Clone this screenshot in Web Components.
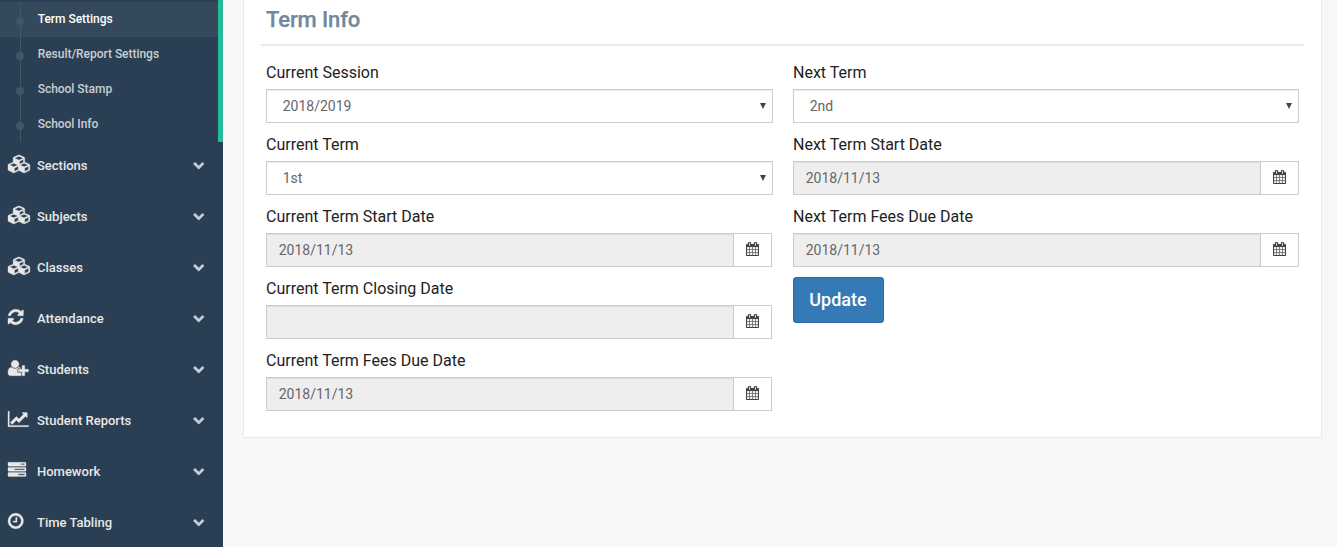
<!DOCTYPE html>
<html lang="en">
<head>
<meta charset="utf-8">
<title>Term Settings</title>
<style>
html,body{margin:0;height:100%;overflow:hidden;background:#f7f7f7}
body{font-family:Roboto,"Liberation Sans",sans-serif;font-size:14px}
</style>
</head>
<body>
<app-shell>
  <side-nav slot="nav">
    <sub-menu slot="sub">
      <sub-item active>Term Settings</sub-item>
      <sub-item>Result/Report Settings</sub-item>
      <sub-item>School Stamp</sub-item>
      <sub-item>School Info</sub-item>
    </sub-menu>
    <nav-item icon="cubes">Sections</nav-item>
    <nav-item icon="cubes">Subjects</nav-item>
    <nav-item icon="cubes">Classes</nav-item>
    <nav-item icon="refresh">Attendance</nav-item>
    <nav-item icon="userplus">Students</nav-item>
    <nav-item icon="chart">Student Reports</nav-item>
    <nav-item icon="tasks">Homework</nav-item>
    <nav-item icon="clock">Time Tabling</nav-item>
  </side-nav>
  <term-panel heading="Term Info">
    <select-field slot="left" label="Current Session" value="2018/2019"></select-field>
    <select-field slot="left" label="Current Term" value="1st"></select-field>
    <date-field slot="left" label="Current Term Start Date" value="2018/11/13"></date-field>
    <date-field slot="left" label="Current Term Closing Date" value=""></date-field>
    <date-field slot="left" label="Current Term Fees Due Date" value="2018/11/13"></date-field>
    <select-field slot="right" label="Next Term" value="2nd"></select-field>
    <date-field slot="right" label="Next Term Start Date" value="2018/11/13"></date-field>
    <date-field slot="right" label="Next Term Fees Due Date" value="2018/11/13"></date-field>
    <primary-button slot="right">Update</primary-button>
  </term-panel>
</app-shell>
<script>
const ICONS = {
  cubes:[0,2304,"M640 1632l384-192v-314l-384 164v342zm-64-454l404-173-404-173-404 173zm1088 454l384-192v-314l-384 164v342zm-64-454l404-173-404-173-404 173zm-448-293l384-165v-266l-384 164v267zm-64-379l441-189-441-189-441 189zm1088 518v416q0 36-19 67t-52 47l-448 224q-25 14-57 14t-57-14l-448-224q-4-2-7-4-2 2-7 4l-448 224q-25 14-57 14t-57-14l-448-224q-33-16-52-47t-19-67v-416q0-38 21.5-70t56.5-48l434-186v-400q0-38 21.5-70t56.5-48l448-192q23-10 50-10t50 10l448 192q35 16 56.5 48t21.5 70v400l434 186q36 16 57 48t21 70z"],
  refresh:[128,1536,"M1639 1056q0 5-1 7-64 268-268 434.5t-478 166.5q-146 0-282.5-55t-243.5-157l-129 129q-19 19-45 19t-45-19-19-45v-448q0-26 19-45t45-19h448q26 0 45 19t19 45-19 45l-137 137q71 66 161 102t187 36q134 0 250-65t186-179q11-17 53-117 8-23 30-23h192q13 0 22.5 9.5t9.5 22.5zm25-800v448q0 26-19 45t-45 19h-448q-26 0-45-19t-19-45 19-45l138-138q-148-137-349-137-134 0-250 65t-186 179q-11 17-53 117-8 23-30 23h-199q-13 0-22.5-9.5t-9.5-22.5v-7q65-268 270-434.5t480-166.5q146 0 284 55.5t245 156.5l130-129q19-19 45-19t45 19 19 45z"],
  userplus:[0,2048,"M704 896q-159 0-271.5-112.5t-112.5-271.5 112.5-271.5 271.5-112.5 271.5 112.5 112.5 271.5-112.5 271.5-271.5 112.5zm960 128h352q13 0 22.5 9.5t9.5 22.5v192q0 13-9.5 22.5t-22.5 9.5h-352v352q0 13-9.5 22.5t-22.5 9.5h-192q-13 0-22.5-9.5t-9.5-22.5v-352h-352q-13 0-22.5-9.5t-9.5-22.5v-192q0-13 9.5-22.5t22.5-9.5h352v-352q0-13 9.5-22.5t22.5-9.5h192q13 0 22.5 9.5t9.5 22.5v352zm-736 224q0 52 38 90t90 38h256v238q-68 50-171 50h-874q-121 0-194-69t-73-190q0-53 3.5-103.5t14-109 26.5-108.5 43-97.5 62-81 85.5-53.5 111.5-20q19 0 39 17 79 61 154.5 91.5t164.5 30.5 164.5-30.5 154.5-91.5q20-17 39-17 132 0 217 96h-223q-52 0-90 38t-38 90v192z"],
  chart:[0,2048,"M2048 1536v128h-2048v-1536h128v1408h1920zm-128-1248v435q0 21-19.5 29.5t-35.5-7.5l-121-121-633 633q-10 10-23 10t-23-10l-233-233-416 416-192-192 585-585q10-10 23-10t23 10l233 233 464-464-121-121q-16-16-7.5-35.5t29.5-19.5h435q14 0 23 9t9 23z"],
  tasks:[0,1792,"M1024 1408h640v-128h-640v128zm-384-512h1024v-128h-1024v128zm640-512h384v-128h-384v128zm512 832v256q0 26-19 45t-45 19h-1664q-26 0-45-19t-19-45v-256q0-26 19-45t45-19h1664q26 0 45 19t19 45zm0-512v256q0 26-19 45t-45 19h-1664q-26 0-45-19t-19-45v-256q0-26 19-45t45-19h1664q26 0 45 19t19 45zm0-512v256q0 26-19 45t-45 19h-1664q-26 0-45-19t-19-45v-256q0-26 19-45t45-19h1664q26 0 45 19t19 45z"],
  clock:[128,1536,"M1024 544v448q0 14-9 23t-23 9h-320q-14 0-23-9t-9-23v-64q0-14 9-23t23-9h224v-352q0-14 9-23t23-9h64q14 0 23 9t9 23zm416 352q0-148-73-273t-198-198-273-73-273 73-198 198-73 273 73 273 198 198 273 73 273-73 198-198 73-273zm224 0q0 209-103 385.5t-279.5 279.5-385.5 103-385.5-103-279.5-279.5-103-385.5 103-385.5 279.5-279.5 385.5-103 385.5 103 279.5 279.5 103 385.5z"],
  chevron:[0,1792,"M1683 808l-742 741q-19 19-45 19t-45-19l-742-741q-19-19-19-45.5t19-45.5l166-165q19-19 45-19t45 19l531 531 531-531q19-19 45-19t45 19l166 165q19 19 19 45.5t-19 45.5z"],
  calendar:[64,1664,"M192 1664h288v-288h-288v288zm352 0h320v-288h-320v288zm-352-352h288v-320h-288v320zm352 0h320v-320h-320v320zm-352-384h288v-288h-288v288zm736 736h320v-288h-320v288zm-384-736h320v-288h-320v288zm768 736h288v-288h-288v288zm-384-352h320v-320h-320v320zm-352-864v-288q0-13-9.5-22.5t-22.5-9.5h-64q-13 0-22.5 9.5t-9.5 22.5v288q0 13 9.5 22.5t22.5 9.5h64q13 0 22.5-9.5t9.5-22.5zm736 864h288v-320h-288v320zm-384-384h320v-288h-320v288zm384 0h288v-288h-288v288zm32-480v-288q0-13-9.5-22.5t-22.5-9.5h-64q-13 0-22.5 9.5t-9.5 22.5v288q0 13 9.5 22.5t22.5 9.5h64q13 0 22.5-9.5t9.5-22.5zm384-64v1280q0 52-38 90t-90 38h-1408q-52 0-90-38t-38-90v-1280q0-52 38-90t90-38h128v-96q0-66 47-113t113-47h64q66 0 113 47t47 113v96h384v-96q0-66 47-113t113-47h64q66 0 113 47t47 113v96h128q52 0 90 38t38 90z"]
};
const icon = (name, size, weight = 0) => {
  const [x, w, d] = ICONS[name];
  return `<svg class="${name}" width="${w / 1792 * size}" height="${size}" viewBox="${x} 0 ${w} 1792" fill="currentColor" stroke="currentColor" stroke-width="${weight}" aria-hidden="true"><path d="${d}"/></svg>`;
};
const define = (tag, render) => customElements.define(tag, class extends HTMLElement {
  connectedCallback() {
    if (!this.shadowRoot) this.attachShadow({mode: "open"}).innerHTML = render(this);
  }
});

define("app-shell", () => `<style>
  :host{display:flex;align-items:flex-start;height:547px;overflow:hidden}
  main{flex:1;padding:0 15px 0 20px}
  </style><slot name="nav"></slot><main><slot></slot></main>`);

define("side-nav", () => `<style>
  :host{display:block;width:223px;height:547px;flex:none;background:#2a3f54;overflow:hidden}
  </style><slot name="sub"></slot><slot></slot>`);

define("sub-menu", () => `<style>
  :host{display:block;box-sizing:border-box;height:142px;padding-top:2px;border-right:5px solid #26b99a}
  </style><slot></slot>`);

define("sub-item", () => `<style>
  :host{display:flex;height:35px;box-sizing:border-box;color:rgba(255,255,255,.75);font-size:12px;font-weight:500;letter-spacing:-.03px}
  :host([active]){background:#35495d;color:#fff}
  .rail{width:37.7px;display:grid;place-items:center start;background:linear-gradient(#425668,#425668) 20px 0/1px 100% no-repeat}
  .dot{width:8px;height:8px;border-radius:50%;background:#425668;margin:3px 0 0 16px}
  .text{line-height:35px}
  </style><span class="rail"><i class="dot"></i></span><span class="text"><slot></slot></span>`);

define("nav-item", el => `<style>
  :host{display:grid;grid-template-columns:29.4px 1fr auto;align-items:center;height:51px;box-sizing:border-box;padding:0 19px 4px 7.6px;color:#e7e7e7;font-size:13px;font-weight:500}
  svg{display:block;overflow:visible}
  .main{margin-top:-4px}
  .arrow{color:#c4cfda;margin-top:-2px}
  </style><span class="main">${icon(el.getAttribute("icon"), 18, 35)}</span><span><slot></slot></span><span class="arrow">${icon("chevron", 11.5, 90)}</span>`);

define("term-panel", el => `<style>
  :host{display:block;box-sizing:border-box;width:1079px;height:438px;padding:0 17px;background:#fff;border:1px solid #e6e9ed;border-top:0}
  h2{margin:0;height:44px;padding:0 5px;border-bottom:2px solid #e6e9ed;color:#73879c;font-size:22px;font-weight:500;letter-spacing:-.12px;-webkit-text-stroke:.25px #73879c;line-height:39px}
  .cols{display:grid;grid-template-columns:507px 506px;column-gap:20px;padding:15px 5px 0}
  </style><h2>${el.getAttribute("heading")}</h2>
  <div class="cols"><div><slot name="left"></slot></div><div><slot name="right"></slot></div></div>`);

const FIELD = `:host{display:block;height:72px}
  label{display:block;height:28px;line-height:23px;font-size:16px;color:#222}
  .box{display:flex;align-items:center;box-sizing:border-box;height:34px;border:1px solid #ccc;color:#666;font-size:14px;box-shadow:inset 0 1px 1px rgba(0,0,0,.075)}`;

define("select-field", el => `<style>${FIELD}
  .box{justify-content:space-between;padding:0 6px 0 15.7px;background:#fff}
  svg{display:block}
  </style><label>${el.getAttribute("label")}</label>
  <div class="box"><span>${el.getAttribute("value")}</span><svg width="6" height="6" viewBox="0 0 6 6"><path d="M0 0h6L3 6z" fill="#444"/></svg></div>`);

define("date-field", el => `<style>${FIELD}
  .box{width:506px;background:#eee}
  .value{flex:1;padding-left:11.7px}
  .addon{display:grid;place-items:center;width:37px;height:32px;border-left:1px solid #ccc;background:#fff;color:#444}
  svg{display:block;margin:-3px 1px 0 0}
  </style><label>${el.getAttribute("label")}</label>
  <div class="box"><span class="value">${el.getAttribute("value")}</span><span class="addon">${icon("calendar", 14, 20)}</span></div>`);

define("primary-button", () => `<style>
  :host{display:block}
  button{display:block;width:91px;height:46px;padding:0 1px 2px 0;border:1px solid #2e6da4;border-radius:3px;background:#337ab7;color:#fff;font:500 18px Roboto,"Liberation Sans",sans-serif}
  </style><button type="button"><slot></slot></button>`);
</script>
</body>
</html>
